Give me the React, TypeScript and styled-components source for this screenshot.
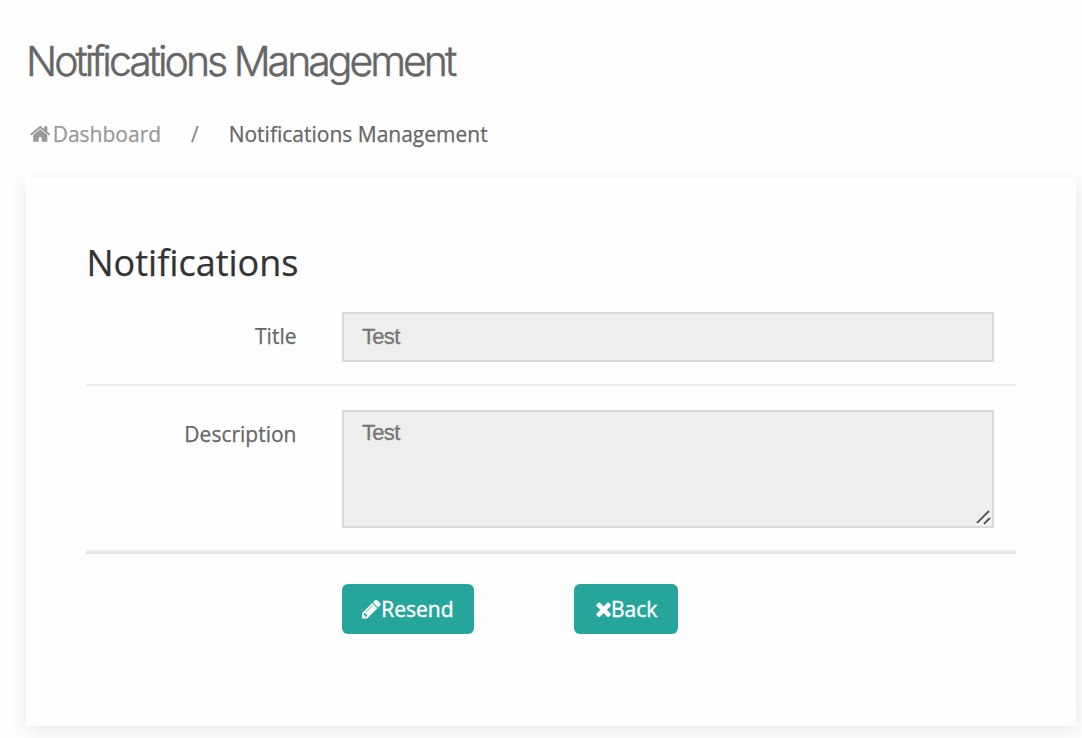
import React from "react";
import styled, { createGlobalStyle } from "styled-components";

const GlobalStyle = createGlobalStyle`
  *, *::before, *::after { box-sizing: border-box; }
  html, body { margin: 0; padding: 0; }
  body {
    background: #fefefe;
    color: #666;
    font-family: "Open Sans", sans-serif;
    font-size: 21px;
    line-height: 30px;
    overflow: hidden;
    -webkit-text-stroke: 0.25px currentColor;
  }
`;

const Page = styled.main`
  display: flex;
  flex-direction: column;
  width: 1082px;
  height: 738px;
  padding: 36px 6px 12px 26px;
`;

const PageTitle = styled.h1`
  margin: 0;
  font-family: Inter, sans-serif;
  font-size: 41px;
  font-weight: 300;
  line-height: 50px;
  letter-spacing: -3px;
  color: #666;
  white-space: nowrap;
  -webkit-text-stroke: 0.5px currentColor;
`;

const Breadcrumbs = styled.nav`
  display: flex;
  align-items: center;
  height: 30px;
  margin-top: 33px;
  padding-left: 4px;
  white-space: nowrap;
`;

const Crumb = styled.span<{ $current?: boolean }>`
  display: flex;
  align-items: center;
  gap: 0.7px;
  color: ${(p) => (p.$current ? "#666" : "#999")};
`;

const Separator = styled.span`
  width: 67.6px;
  text-align: center;
  color: #888;
`;

const Card = styled.section`
  flex: 1;
  margin-top: 29px;
  padding: 59px 60px 60px;
  background: #fefefe;
  box-shadow: 0 4px 18px rgba(0, 0, 0, 0.09);
`;

const CardTitle = styled.h2`
  margin: 0 0 23px 0.5px;
  font-size: 36px;
  font-weight: 400;
  line-height: 52px;
  color: #333;
`;

const FormRow = styled.div<{ $last?: boolean }>`
  display: grid;
  grid-template-columns: 210.5px 652px;
  column-gap: 45.5px;
  width: 930px;
  padding-bottom: 22px;
  margin-bottom: ${(p) => (p.$last ? "30px" : "24px")};
  border-bottom: 2px solid #eee;
  box-shadow: ${(p) => (p.$last ? "0 2px 0 #e5e5e5" : "none")};
`;

const Label = styled.label`
  padding-top: 9px;
  text-align: right;
`;

const fieldStyle = `
  display: block;
  width: 100%;
  margin: 0;
  border: 2px solid #d9d9d9;
  border-radius: 0;
  outline: none;
  background: #eee;
  color: #777;
  font-family: "Liberation Sans", Arial, sans-serif;
  font-size: 22px;
  letter-spacing: -0.7px;
  -webkit-text-stroke: 0.3px currentColor;
`;

const TextInput = styled.input`
  ${fieldStyle}
  height: 50px;
  padding: 0 18px;
`;

const AreaFrame = styled.div`
  position: relative;
  height: 118px;
`;

const TextArea = styled.textarea`
  ${fieldStyle}
  height: 118px;
  padding: 6px 18px;
  line-height: 30px;
  resize: none;
`;

const ResizeGrip = styled.svg`
  position: absolute;
  right: 2px;
  bottom: 2px;
  width: 17px;
  height: 17px;
  pointer-events: none;
`;

const Actions = styled.div`
  display: flex;
  gap: 100px;
  margin: 32px 0 0 256px;
`;

const Button = styled.button<{ $width: number; $lift?: number }>`
  display: flex;
  align-items: center;
  justify-content: center;
  width: ${(p) => p.$width}px;
  height: 50px;
  padding: 0 0 ${(p) => p.$lift ?? 0}px;
  border: 0;
  border-radius: 6px;
  background: #26a69a;
  color: #fff;
  font: 400 21px/30px "Open Sans", sans-serif;
  -webkit-text-stroke: 0.4px #fff;
`;

const Glyph = styled.svg`
  flex: none;
  height: 22px;
  fill: currentColor;
  stroke: none;
`;

const HomeIcon = () => (
  <Glyph viewBox="64 0 1792 1792" width="22">
    <path d="M1472 992v480q0 26-19 45t-45 19h-384v-384h-256v384h-384q-26 0-45-19t-19-45v-480q0-1 .5-3t.5-3l575-474 575 474q1 2 1 6zm223-69l-62 74q-8 9-21 11h-3q-13 0-21-7l-692-577-692 577q-12 8-24 7-13-2-21-11l-62-74q-8-10-7-23.5t11-21.5l719-599q32-26 76-26t76 26l244 204v-195q0-14 9-23t23-9h192q14 0 23 9t9 23v408l219 182q10 8 11 21.5t-7 23.5z" />
  </Glyph>
);

const PencilIcon = () => (
  <Glyph viewBox="128 0 1536 1792" width="18.86">
    <path d="M491 1536l91-91-235-235-91 91v107h128v128h107zm523-928q0-22-22-22-10 0-17 7l-542 542q-7 7-7 17 0 22 22 22 10 0 17-7l542-542q7-7 7-17zm-54-192l416 416-832 832h-416v-416zm683 96q0 53-37 90l-166 166-416-416 166-165q36-38 90-38 53 0 91 38l235 234q37 39 37 91z" />
  </Glyph>
);

const TimesIcon = () => (
  <Glyph viewBox="192 0 1320 1792" width="16.2">
    <path d="M1490 1322q0 40-28 68l-136 136q-28 28-68 28t-68-28l-294-294-294 294q-28 28-68 28t-68-28l-136-136q-28-28-28-68t28-68l294-294-294-294q-28-28-28-68t28-68l136-136q28-28 68-28t68 28l294 294 294-294q28-28 68-28t68 28l136 136q28 28 28 68t-28 68l-294 294 294 294q28 28 28 68z" />
  </Glyph>
);

export default function App() {
  return (
    <>
      <GlobalStyle />
      <Page>
        <PageTitle>Notifications Management</PageTitle>
        <Breadcrumbs>
          <Crumb>
            <HomeIcon />
            Dashboard
          </Crumb>
          <Separator>/</Separator>
          <Crumb $current>Notifications Management</Crumb>
        </Breadcrumbs>
        <Card>
          <CardTitle>Notifications</CardTitle>
          <FormRow>
            <Label htmlFor="title">Title</Label>
            <TextInput id="title" readOnly value="Test" />
          </FormRow>
          <FormRow $last>
            <Label htmlFor="description">Description</Label>
            <AreaFrame>
              <TextArea id="description" readOnly value="Test" />
              <ResizeGrip viewBox="0 0 17 17">
                <path d="M2 14.5 14 2.5M9 15.5l6-6" fill="none" stroke="#fff" strokeWidth="2" transform="translate(0 1.5)" />
                <path d="M2 14 14 2M9 15l6-6" fill="none" stroke="#555" strokeWidth="1.8" />
              </ResizeGrip>
            </AreaFrame>
          </FormRow>
          <Actions>
            <Button $width={132} $lift={1}>
              <PencilIcon />
              Resend
            </Button>
            <Button $width={104}>
              <TimesIcon />
              Back
            </Button>
          </Actions>
        </Card>
      </Page>
    </>
  );
}
